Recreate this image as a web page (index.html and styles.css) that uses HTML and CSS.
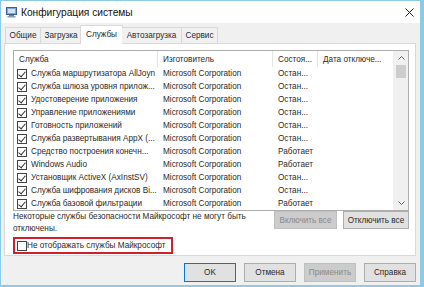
FILE: index.html
```html
<!DOCTYPE html>
<html lang="ru">
<head>
<meta charset="utf-8">
<link rel="stylesheet" href="styles.css">
</head>
<body>
<div class="window">
  <div class="titlebar">
    <svg class="app-icon" width="11" height="11" viewBox="0 0 11 11">
      <rect x="0.5" y="0.5" width="10" height="7" fill="#7fa6d6" stroke="#3a5f9c"/>
      <rect x="2" y="2" width="7" height="4" fill="#cfe3f7"/>
      <rect x="3" y="8" width="5" height="1" fill="#6b7f99"/>
      <rect x="1.5" y="9" width="8" height="1.5" fill="#8a9ab0"/>
    </svg>
    <span class="title">Конфигурация системы</span>
    <svg class="close" width="9" height="9" viewBox="0 0 9 9">
      <path d="M0.5 0.5 L8.5 8.5 M8.5 0.5 L0.5 8.5" stroke="#222" stroke-width="1"/>
    </svg>
  </div>
  <div class="content">
    <div class="tabs">
      <div class="tab t1">Общие</div>
      <div class="tab t2">Загрузка</div>
      <div class="tab t3 active">Службы</div>
      <div class="tab t4">Автозагрузка</div>
      <div class="tab t5">Сервис</div>
    </div>
    <div class="panel">
      <div class="listbox">
        <div class="list-main">
          <div class="header">
            <div class="hcell c1">Служба</div>
            <div class="hcell c2">Изготовитель</div>
            <div class="hcell c3">Состоя...</div>
            <div class="hcell c4">Дата отключе...</div>
          </div>
          <div class="rows">
            <div class="row"><div class="cell c1"><span class="cb checked"></span>Служба маршрутизатора AllJoyn</div><div class="cell c2">Microsoft Corporation</div><div class="cell c3">Остан...</div><div class="cell c4"></div></div>
            <div class="row"><div class="cell c1"><span class="cb checked"></span>Служба шлюза уровня прилож...</div><div class="cell c2">Microsoft Corporation</div><div class="cell c3">Остан...</div><div class="cell c4"></div></div>
            <div class="row"><div class="cell c1"><span class="cb checked"></span>Удостоверение приложения</div><div class="cell c2">Microsoft Corporation</div><div class="cell c3">Остан...</div><div class="cell c4"></div></div>
            <div class="row"><div class="cell c1"><span class="cb checked"></span>Управление приложениями</div><div class="cell c2">Microsoft Corporation</div><div class="cell c3">Остан...</div><div class="cell c4"></div></div>
            <div class="row"><div class="cell c1"><span class="cb checked"></span>Готовность приложений</div><div class="cell c2">Microsoft Corporation</div><div class="cell c3">Остан...</div><div class="cell c4"></div></div>
            <div class="row"><div class="cell c1"><span class="cb checked"></span>Служба развертывания AppX (...</div><div class="cell c2">Microsoft Corporation</div><div class="cell c3">Остан...</div><div class="cell c4"></div></div>
            <div class="row"><div class="cell c1"><span class="cb checked"></span>Средство построения конечн...</div><div class="cell c2">Microsoft Corporation</div><div class="cell c3">Работает</div><div class="cell c4"></div></div>
            <div class="row"><div class="cell c1"><span class="cb checked"></span>Windows Audio</div><div class="cell c2">Microsoft Corporation</div><div class="cell c3">Работает</div><div class="cell c4"></div></div>
            <div class="row"><div class="cell c1"><span class="cb checked"></span>Установщик ActiveX (AxInstSV)</div><div class="cell c2">Microsoft Corporation</div><div class="cell c3">Остан...</div><div class="cell c4"></div></div>
            <div class="row"><div class="cell c1"><span class="cb checked"></span>Служба шифрования дисков Bi...</div><div class="cell c2">Microsoft Corporation</div><div class="cell c3">Остан...</div><div class="cell c4"></div></div>
            <div class="row"><div class="cell c1"><span class="cb checked"></span>Служба базовой фильтрации</div><div class="cell c2">Microsoft Corporation</div><div class="cell c3">Работает</div><div class="cell c4"></div></div>
          </div>
        </div>
        <div class="scrollbar">
          <div class="arrow up"><svg width="7" height="4" viewBox="0 0 7 4"><path d="M0.5 3.5 L3.5 0.5 L6.5 3.5" fill="none" stroke="#606060"/></svg></div>
          <div class="track"><div class="thumb"></div></div>
          <div class="arrow down"><svg width="7" height="4" viewBox="0 0 7 4"><path d="M0.5 0.5 L3.5 3.5 L6.5 0.5" fill="none" stroke="#606060"/></svg></div>
        </div>
      </div>
      <div class="below">
        <div class="note">Некоторые службы безопасности Майкрософт не могут быть отключены.</div>
        <div class="btn disabled enable-all">Включить все</div>
        <div class="btn disable-all">Отключить все</div>
      </div>
      <div class="hide-ms"><span class="cb"></span>Не отображать службы Майкрософт</div>
    </div>
    <div class="footer">
      <div class="btn default">OK</div>
      <div class="btn">Отмена</div>
      <div class="btn disabled">Применить</div>
      <div class="btn">Справка</div>
    </div>
  </div>
</div>
</body>
</html>
```
FILE: styles.css
```css
* { box-sizing: border-box; }
html, body { margin: 0; padding: 0; }
body {
  font-family: "Liberation Sans", Arial, sans-serif;
  font-size: 8.2px;
  color: #2a2a2a;
  background: #fff;
}
.window {
  width: 424px;
  height: 287px;
  border: 1px solid #8ccbe8;
  border-right-width: 4px;
  border-bottom-width: 2px;
  background: #f0f0f0;
  display: flex;
  flex-direction: column;
}
.titlebar {
  height: 22px;
  background: #fff;
  display: flex;
  align-items: center;
  padding: 0 0 0 5px;
}
.app-icon { margin-right: 4px; }
.title { font-size: 10.2px; flex: 1; color: #111; }
.close { margin-right: 6px; }
.content {
  flex: 1;
  padding: 2px 4px 0 3px;
  display: flex;
  flex-direction: column;
}
.tabs {
  display: flex;
  height: 18px;
  align-items: flex-end;
  padding-left: 1px;
  position: relative;
  z-index: 1;
}
.tab {
  height: 16px;
  border: 1px solid #d9d9d9;
  border-bottom: none;
  border-right: none;
  background: #f0f0f0;
  display: flex;
  align-items: center;
  justify-content: center;
}
.t1 { width: 35px; }
.t2 { width: 41px; }
.t3 { width: 43px; }
.t4 { width: 59px; }
.t5 { width: 37px; border-right: 1px solid #d9d9d9; }
.tab.active {
  background: #fff;
  border-right: 1px solid #d9d9d9;
  margin: 0 -1px -1px -1px;
  padding-bottom: 2px;
  height: 19px;
}
.tab.active + .tab { border-left: none; }
.panel {
  height: 213px;
  background: #fff;
  border: 1px solid #d9d9d9;
  padding: 6px 6px 0 8px;
  display: flex;
  flex-direction: column;
}
.listbox {
  height: 161px;
  border: 1px solid #adadad;
  display: flex;
  background: #fff;
  flex: none;
}
.list-main { flex: 1; display: flex; flex-direction: column; }
.header {
  height: 17px;
  display: flex;
}
.hcell {
  height: 100%;
  display: flex;
  align-items: center;
  padding-left: 5px;
  border-right: 1px solid #e5e5e5;
  white-space: nowrap;
  overflow: hidden;
}
.c1 { width: 144px; }
.c2 { width: 115px; }
.c3 { width: 45px; }
.c4 { flex: 1; border-right: none; }
.rows { display: flex; flex-direction: column; }
.row { height: 13px; display: flex; }
.cell {
  display: flex;
  align-items: center;
  padding-left: 5px;
  white-space: nowrap;
  overflow: hidden;
}
.row .c1 { padding-left: 3px; }
.cb {
  width: 10px;
  height: 10px;
  border: 1px solid #444;
  background: #fff;
  margin-right: 4px;
  flex: none;
  position: relative;
}
.cb.checked::after {
  content: "";
  position: absolute;
  left: 2px;
  top: 0px;
  width: 3px;
  height: 6px;
  border: solid #333;
  border-width: 0 1px 1px 0;
  transform: rotate(40deg);
}
.scrollbar {
  width: 15px;
  display: flex;
  flex-direction: column;
  background: #f0f0f0;
  border-left: 1px solid #f0f0f0;
}
.arrow {
  height: 14px;
  display: flex;
  align-items: center;
  justify-content: center;
}
.track { flex: 1; padding: 0 2px; }
.thumb { height: 13px; background: #cdcdcd; }
.below {
  display: flex;
  align-items: flex-start;
  gap: 6px;
  height: 24px;
  flex: none;
}
.note { flex: 1; line-height: 12px; }
.btn {
  height: 18px;
  border: 1px solid #adadad;
  background: #e1e1e1;
  display: flex;
  align-items: center;
  justify-content: center;
  padding: 0 3px;
  white-space: nowrap;
}
.btn.disabled {
  background: #cccccc;
  border-color: #bfbfbf;
  color: #8a8a8a;
}
.enable-all { width: 63px; }
.disable-all { width: 66px; }
.hide-ms {
  margin-top: 2px;
  width: 160px;
  height: 17px;
  border: 2px solid #d11f2e;
  display: flex;
  align-items: center;
  padding-left: 2px;
  flex: none;
}
.hide-ms .cb { border-color: #444; margin-right: 0; }
.footer {
  display: flex;
  justify-content: flex-end;
  gap: 8px;
  padding: 7px 0 0 0;
}
.footer .btn { width: 52px; height: 19px; }
.footer .btn.default { border: 1px solid #0078d7; }
```
